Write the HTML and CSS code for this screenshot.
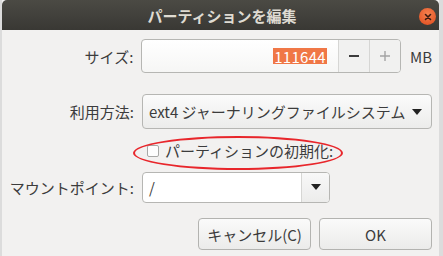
FILE: index.html
```html
<!DOCTYPE html>
<html lang="ja">
<head>
  <meta charset="UTF-8">
  <title>パーティションを編集</title>
  <link rel="stylesheet" href="styles.css">
</head>
<body>
  <div class="window">
    <!-- Title bar -->
    <div class="titlebar">
      <span class="title">パーティションを編集</span>
      <span class="close">
        <svg width="10" height="10" viewBox="0 0 10 10"><path d="M2.5 2.5 L7.5 7.5 M7.5 2.5 L2.5 7.5" stroke="#3a1a10" stroke-width="1.6" stroke-linecap="round"/></svg>
      </span>
    </div>

    <div class="content">
      <!-- Size -->
      <div class="row row-size">
        <span class="label">サイズ:</span>
        <div class="spin">
          <div class="spin-entry"><span class="selected">111644</span></div>
          <span class="spin-btn">
            <svg width="12" height="12" viewBox="0 0 12 12"><path d="M1 6 H11" stroke="#3c3c3c" stroke-width="2"/></svg>
          </span>
          <span class="spin-btn">
            <svg width="12" height="12" viewBox="0 0 12 12"><path d="M1 6 H11 M6 1 V11" stroke="#a4a4a4" stroke-width="1.4"/></svg>
          </span>
        </div>
        <span class="unit">MB</span>
      </div>

      <!-- Filesystem -->
      <div class="row row-use">
        <span class="label">利用方法:</span>
        <div class="combo">
          <span class="combo-text">ext4 ジャーナリングファイルシステム</span>
          <span class="arrow"></span>
        </div>
      </div>

      <!-- Format checkbox -->
      <div class="row row-check">
        <span class="checkbox"></span>
        <span class="check-label">パーティションの初期化:</span>
        <span class="mark"></span>
      </div>

      <!-- Mount point -->
      <div class="row row-mount">
        <span class="label">マウントポイント:</span>
        <div class="combo-entry">
          <span class="entry-text">/</span>
          <span class="entry-btn"><span class="arrow"></span></span>
        </div>
      </div>

      <!-- Buttons -->
      <div class="buttons">
        <button>キャンセル(C)</button>
        <button>OK</button>
      </div>
    </div>
  </div>
</body>
</html>
```

FILE: styles.css
```css
body {
  margin: 0;
  background: #dcdcdc;
  font-family: 'Noto Sans CJK JP', 'Noto Sans', sans-serif;
  font-size: 15px;
  color: #3c3c3c;
}

.window {
  width: 437px;
  height: 256px;
  margin-left: 2px;
  background: #f2f1f0;
}

.titlebar {
  height: 30px;
  display: flex;
  align-items: center;
  justify-content: center;
  position: relative;
  background: linear-gradient(#4b4a44, #393834);
  border-radius: 5px 5px 0 0;
}

.title {
  color: #dfdbd2;
  font-weight: bold;
  font-size: 15px;
  margin-left: 3px;
}

.close {
  position: absolute;
  right: 3px;
  top: 8px;
  width: 17px;
  height: 17px;
  border-radius: 50%;
  background: radial-gradient(circle at 50% 35%, #f5814f, #df4a1c);
  display: flex;
  align-items: center;
  justify-content: center;
}

.content {
  padding: 9px 7px 0 0;
}

.row {
  display: flex;
  align-items: center;
}

.label {
  width: 132px;
  margin-right: 8px;
  text-align: right;
}

/* size spin button */
.row-size {
  height: 34px;
}

.spin {
  width: 261px;
  height: 34px;
  box-sizing: border-box;
  display: flex;
  border: 1px solid #b6b6b3;
  border-radius: 4px;
  background: linear-gradient(#ffffff, #f6f6f5);
  overflow: hidden;
}

.spin-entry {
  flex: 1;
  display: flex;
  align-items: center;
  justify-content: flex-end;
  padding-right: 11px;
}

.selected {
  background: #f07746;
  color: #fff;
  line-height: 15px;
  padding: 1px 1px 0;
  letter-spacing: 0.3px;
}

.spin-btn {
  width: 30px;
  display: flex;
  align-items: center;
  justify-content: center;
  border-left: 1px solid #d6d6d4;
  background: #f1f1f0;
}

.unit {
  margin-left: 9px;
}

/* filesystem combo */
.row-use {
  margin-top: 21px;
  height: 35px;
}

.combo {
  width: 290px;
  height: 35px;
  box-sizing: border-box;
  display: flex;
  align-items: center;
  justify-content: space-between;
  padding: 0 9px 0 6px;
  border: 1px solid #b6b6b3;
  border-radius: 4px;
  background: linear-gradient(#fbfbfb, #ececeb);
}

.arrow {
  width: 0;
  height: 0;
  border-left: 5px solid transparent;
  border-right: 5px solid transparent;
  border-top: 6px solid #222;
}

/* checkbox */
.row-check {
  height: 43px;
  position: relative;
}

.checkbox {
  width: 10px;
  height: 10px;
  margin: 0 6px 0 145px;
  border: 1px solid #a8a8a6;
  border-radius: 2px;
  background: #fdfdfd;
}

.mark {
  position: absolute;
  left: 131px;
  top: 7px;
  width: 206px;
  height: 30px;
  border: 2px solid #e8262b;
  border-radius: 50%;
}

/* mount point */
.row-mount {
  height: 30px;
}

.combo-entry {
  width: 188px;
  height: 31px;
  box-sizing: border-box;
  display: flex;
  border: 1px solid #b6b6b3;
  border-radius: 4px;
  background: #fff;
  overflow: hidden;
}

.entry-text {
  flex: 1;
  display: flex;
  align-items: center;
  padding-left: 6px;
}

.entry-btn {
  width: 27px;
  display: flex;
  align-items: center;
  justify-content: center;
  border-left: 1px solid #d6d6d4;
  background: linear-gradient(#f8f8f8, #ececeb);
}

/* dialog buttons */
.buttons {
  display: flex;
  justify-content: flex-end;
  gap: 8px;
  margin-top: 16px;
}

.buttons button {
  width: 113px;
  height: 32px;
  border: 1px solid #b3b3b0;
  border-radius: 4px;
  background: linear-gradient(#fafafa, #ebebea);
  font-family: inherit;
  font-size: 15px;
  color: #3c3c3c;
  padding: 0;
}
```
